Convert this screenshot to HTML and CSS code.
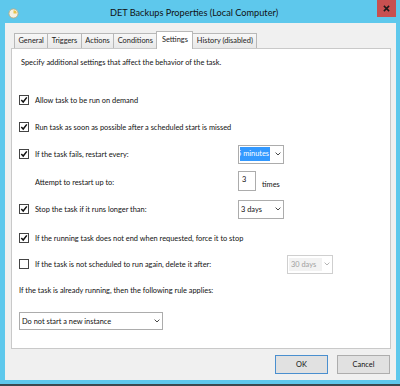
FILE: index.html
```html
<!DOCTYPE html>
<html lang="en">
<head>
    <meta charset="UTF-8">
    <meta name="viewport" content="width=device-width, initial-scale=1.0">
    <title>DET Backups Properties</title>
    <link rel="stylesheet" href="styles.css">
</head>
<body>
    <main class="ventana">
        <header class="titulo">
            <svg class="icono" width="11" height="11" viewBox="0 0 12 12">
                <circle cx="6" cy="6" r="5" fill="#f5f1e4" stroke="#b9ab80" stroke-width="1"/>
                <path d="M6 6V2.5A3.5 3.5 0 0 1 9.5 6z" fill="#e9c34a"/>
            </svg>
            <span class="titulo-texto">DET Backups Properties (Local Computer)</span>
            <button class="cerrar">
                <svg width="7" height="7" viewBox="0 0 8 8"><path d="M1 1l6 6M7 1l-6 6" stroke="#1a1a1a" stroke-width="1.7"/></svg>
            </button>
        </header>

        <section class="cliente">
            <nav class="pestanas">
                <span class="pestana">General</span>
                <span class="pestana">Triggers</span>
                <span class="pestana">Actions</span>
                <span class="pestana">Conditions</span>
                <span class="pestana activa">Settings</span>
                <span class="pestana">History (disabled)</span>
            </nav>

            <div class="panel">
                <div class="fila fila-desc">Specify additional settings that affect the behavior of the task.</div>

                <div class="fila fila-allow">
                    <span class="check marcado"></span>
                    <span class="etiqueta">Allow task to be run on demand</span>
                </div>

                <div class="fila fila-run">
                    <span class="check marcado"></span>
                    <span class="etiqueta">Run task as soon as possible after a scheduled start is missed</span>
                </div>

                <div class="fila fila-fails">
                    <span class="check marcado"></span>
                    <span class="etiqueta ancho">If the task fails, restart every:</span>
                    <span class="combo combo-corto">
                        <span class="combo-texto recortado"><span class="seleccion">5 minutes</span></span>
                        <span class="flecha"></span>
                    </span>
                </div>

                <div class="fila fila-attempt">
                    <span class="sin-check"></span>
                    <span class="etiqueta ancho">Attempt to restart up to:</span>
                    <span class="caja">3</span>
                    <span class="veces">times</span>
                </div>

                <div class="fila fila-stop">
                    <span class="check marcado"></span>
                    <span class="etiqueta ancho">Stop the task if it runs longer than:</span>
                    <span class="combo combo-corto">
                        <span class="combo-texto">3 days</span>
                        <span class="flecha"></span>
                    </span>
                </div>

                <div class="fila fila-running">
                    <span class="check marcado"></span>
                    <span class="etiqueta">If the running task does not end when requested, force it to stop</span>
                </div>

                <div class="fila fila-notsched">
                    <span class="check"></span>
                    <span class="etiqueta mas-ancho">If the task is not scheduled to run again, delete it after:</span>
                    <span class="combo combo-corto deshabilitado">
                        <span class="combo-texto">30 days</span>
                        <span class="flecha"></span>
                    </span>
                </div>

                <div class="fila fila-already">If the task is already running, then the following rule applies:</div>

                <div class="fila fila-select">
                    <span class="combo combo-largo">
                        <span class="combo-texto">Do not start a new instance</span>
                        <span class="flecha"></span>
                    </span>
                </div>
            </div>

            <footer class="acciones">
                <button class="boton defecto">OK</button>
                <button class="boton">Cancel</button>
            </footer>
        </section>
    </main>
</body>
</html>
```

FILE: styles.css
```css
body {
    margin: 0;
    font-family: Lato, "Liberation Sans", Arial, sans-serif;
    font-size: 7.4px;
    color: #111;
    background: #2b2b2b;
}
.ventana {
    width: 400px;
    height: 386px;
    background-color: #5ec8ec;
    box-sizing: border-box;
    border-bottom: 2px solid #3a4a50;
    display: flex;
    flex-direction: column;
}
.titulo {
    height: 23px;
    display: flex;
    align-items: flex-start;
}
.icono {
    margin: 8px 0 0 8px;
}
.titulo-texto {
    flex: 1;
    text-align: center;
    font-size: 9.2px;
    color: #111;
    padding-top: 7px;
    margin-left: -8px;
}
.cerrar {
    width: 19px;
    height: 17px;
    margin-right: 4px;
    border: none;
    padding: 0;
    background-color: #c75050;
    display: flex;
    justify-content: center;
    align-items: center;
}
.cliente {
    flex: 1;
    margin: 0 4px 4px 5px;
    background-color: #f0f0f0;
    padding: 8px 5px 0 6px;
    display: flex;
    flex-direction: column;
}

/* pestañas */
.pestanas {
    display: flex;
    align-items: flex-end;
    height: 17px;
    padding-left: 3px;
}
.pestana {
    height: 14px;
    line-height: 14px;
    padding: 0 3.5px;
    border: 1px solid #b8b8b8;
    border-bottom: none;
    margin-right: -1px;
    background: linear-gradient(#f7f7f7, #e8e8e8);
    color: #222;
    white-space: nowrap;
}
.pestana.activa {
    height: 17px;
    line-height: 16px;
    background: #fff;
    position: relative;
    z-index: 1;
    margin-bottom: -1px;
    padding: 0 4.5px;
}

.panel {
    background-color: #fff;
    border: 1px solid #c9c9c9;
    padding: 3px 0 17px 7px;
}
.fila {
    display: flex;
    align-items: center;
    height: 20px;
    white-space: nowrap;
}
.fila-desc { padding-left: 2px; }
.fila-allow { margin-top: 18px; }
.fila-run { margin-top: 7px; }
.fila-fails { margin-top: 7px; }
.fila-attempt { margin-top: 8px; }
.fila-stop { margin-top: 7px; }
.fila-running { margin-top: 9px; }
.fila-notsched { margin-top: 6px; }
.fila-already { margin-top: 6px; }
.fila-select { margin-top: 11px; }

.check, .sin-check {
    width: 8px;
    height: 8px;
    margin-right: 6px;
    flex: none;
}
.check {
    border: 1px solid #444;
    background-color: #fff;
}
.check.marcado {
    background: #fff url("data:image/svg+xml,%3Csvg xmlns='http://www.w3.org/2000/svg' viewBox='0 0 8 8'%3E%3Cpath d='M1.3 4l1.9 2L6.8 1.4' fill='none' stroke='%23111' stroke-width='1.5'/%3E%3C/svg%3E") no-repeat center / 8px 8px;
}
.sin-check {
    border: 1px solid transparent;
}
.etiqueta.ancho {
    width: 203px;
}
.etiqueta.mas-ancho {
    width: 252px;
}

.combo {
    display: flex;
    align-items: center;
    height: 17px;
    border: 1px solid #acacac;
    background-color: #fff;
    box-sizing: border-box;
}
.combo-corto {
    width: 46px;
    height: 19px;
}
.combo-largo {
    width: 144px;
    height: 18px;
}
.combo-texto {
    flex: 1;
    padding-left: 2px;
    overflow: hidden;
}
.recortado {
    padding-left: 1px;
}
.seleccion {
    display: inline-block;
    background-color: #3399ff;
    color: #fff;
    line-height: 14px;
    padding-right: 1px;
    text-indent: -3px;
}
.flecha {
    width: 10px;
    height: 100%;
    background: url("data:image/svg+xml,%3Csvg xmlns='http://www.w3.org/2000/svg' viewBox='0 0 6 4'%3E%3Cpath d='M0.6 0.6L3 3l2.4-2.4' fill='none' stroke='%23333' stroke-width='0.9'/%3E%3C/svg%3E") no-repeat 2px center / 6px 4px;
}
.deshabilitado {
    border-color: #cfcfcf;
    color: #a0a0a0;
}
.deshabilitado .combo-texto {
    background-color: #f2f2f2;
    margin: 2px 0 2px 1px;
    line-height: 13px;
}
.deshabilitado .flecha {
    opacity: 0.4;
}

.caja {
    width: 18px;
    height: 20px;
    box-sizing: border-box;
    border: 1px solid #acacac;
    padding: 3px 0 0 3px;
    margin-top: -2px;
}
.veces {
    margin-left: 6px;
    margin-top: 4px;
}

.acciones {
    display: flex;
    justify-content: flex-end;
    gap: 9px;
    padding: 6px 1px 0 0;
}
.boton {
    width: 53px;
    height: 19px;
    font-family: Lato, "Liberation Sans", Arial, sans-serif;
    font-size: 7.4px;
    color: #111;
    background-color: #e1e1e1;
    border: 1px solid #adadad;
    padding: 0;
}
.boton.defecto {
    border-color: #4a8fcf;
}
```
